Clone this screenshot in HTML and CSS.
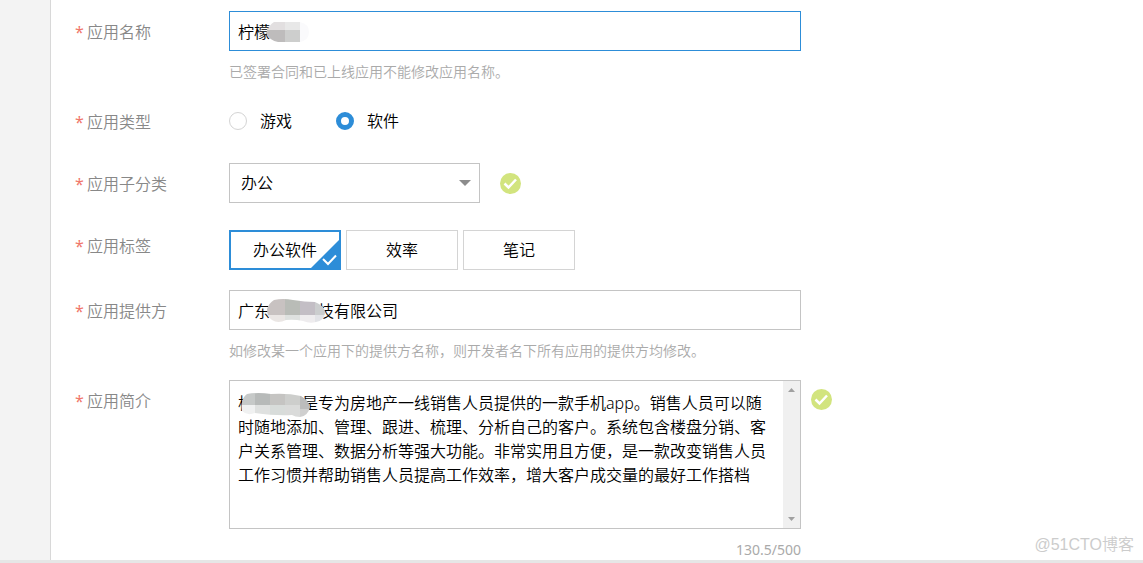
FILE: index.html
```html
<!DOCTYPE html>
<html lang="zh-CN">
<head>
<meta charset="utf-8">
<meta name="viewport" content="width=device-width, initial-scale=1">
<title>应用信息</title>
<link rel="stylesheet" href="styles.css">
</head>
<body>
<div class="page">
  <div class="body">
    <aside class="sidebar"></aside>
    <form class="form">
      <div class="row">
        <label class="label" for="name"><span class="star">*</span>应用名称</label>
        <div class="field">
          <div class="control">
            <input class="input input--focus" id="name" type="text" value="柠檬">
            <svg class="mask mask--name" width="44" height="22" viewBox="0 0 44 22" aria-hidden="true">
              <clipPath id="c1"><path d="M8 1H34Q43 3 43 11Q43 19 34 21H12Q4 20 0 12Q3 4 8 1Z"/></clipPath>
              <g clip-path="url(#c1)"><path fill="#e2dfe0" d="M0 0h19v9H0z"/><path fill="#e8e8e8" d="M19 0h15v9H19z"/><path fill="#bebcbc" d="M0 9h19v13H0z"/><path fill="#cdcecd" d="M19 9h15v13H19z"/><path fill="#fafafc" d="M34 0h10v22H34z"/></g>
            </svg>
          </div>
          <p class="hint">已签署合同和已上线应用不能修改应用名称。</p>
        </div>
      </div>

      <div class="row" role="radiogroup" aria-labelledby="type">
        <span class="label" id="type"><span class="star">*</span>应用类型</span>
        <div class="field radios">
          <label class="option"><input class="radio" type="radio" name="type">游戏</label>
          <label class="option"><input class="radio" type="radio" name="type" checked>软件</label>
        </div>
      </div>

      <div class="row row--select">
        <label class="label" for="category"><span class="star">*</span>应用子分类</label>
        <div class="field with-status with-status--select">
          <div class="select-box">
            <select class="select" id="category"><option>办公</option></select>
            <svg class="arrow" width="12" height="6" viewBox="0 0 12 6" aria-hidden="true"><path fill="#8c8c8c" d="M0 0h12L6 6z"/></svg>
          </div>
          <svg class="ok" width="21" height="21" viewBox="0 0 21 21" aria-hidden="true"><circle cx="10.500" cy="10.500" r="10.500" fill="#d2e47e"/><path d="M4.500 10.500l4 4 7.500-8" fill="none" stroke="#fff" stroke-width="2.500"/></svg>
        </div>
      </div>

      <div class="row" role="group" aria-labelledby="tags">
        <span class="label label--tags" id="tags"><span class="star">*</span>应用标签</span>
        <div class="field tags">
          <button class="tag tag--on" type="button" aria-pressed="true">办公软件
            <svg class="corner" width="28" height="28" viewBox="0 0 28 28" aria-hidden="true"><path fill="#2d8dd8" d="M28 0v28H0z"/><path d="M12 19l5 5 8-8.500" fill="none" stroke="#fff" stroke-width="2"/></svg>
          </button>
          <button class="tag" type="button">效率</button>
          <button class="tag" type="button">笔记</button>
        </div>
      </div>

      <div class="row">
        <label class="label" for="provider"><span class="star">*</span>应用提供方</label>
        <div class="field">
          <div class="control">
            <input class="input" id="provider" type="text" value="广东　　　技有限公司">
            <svg class="mask mask--provider" width="58" height="24" viewBox="0 0 58 24" aria-hidden="true">
              <clipPath id="c2"><path d="M7 1Q16-1 26 1Q38 3 48 3Q58 7 58 14Q57 22 49 23Q43 25 36 22Q27 20 19 21Q11 25 5 21Q0 18 0 10Q2 4 7 1Z"/></clipPath>
              <g clip-path="url(#c2)"><path fill="#c8c2c1" d="M0 0h18v16H0z"/><path fill="#b9bcb7" d="M18 0h15v16H18z"/><path fill="#c3bec5" d="M33 0h15v16H33z"/><path fill="#cbcdce" d="M48 0h10v16H48z"/><path fill="#eae6e4" d="M0 16h18v8H0z"/><path fill="#dee1df" d="M18 16h15v8H18z"/><path fill="#eeecee" d="M33 16h15v8H33z"/><path fill="#e2e3e7" d="M48 16h10v8H48z"/></g>
            </svg>
          </div>
          <p class="hint">如修改某一个应用下的提供方名称，则开发者名下所有应用的提供方均修改。</p>
        </div>
      </div>

      <div class="row row--last">
        <label class="label" for="intro"><span class="star">*</span>应用简介</label>
        <div class="field">
          <div class="with-status with-status--top">
            <div class="area-box">
              <textarea class="area" id="intro" rows="5">柠　　　是专为房地产一线销售人员提供的一款手机app。销售人员可以随
时随地添加、管理、跟进、梳理、分析自己的客户。系统包含楼盘分销、客
户关系管理、数据分析等强大功能。非常实用且方便，是一款改变销售人员
工作习惯并帮助销售人员提高工作效率，增大客户成交量的最好工作搭档</textarea>
              <div class="scroll" aria-hidden="true">
                <svg width="7" height="4" viewBox="0 0 7 4"><path fill="#a0a0a0" d="M0 4h7L3.500 0z"/></svg>
                <svg width="7" height="4" viewBox="0 0 7 4"><path fill="#a0a0a0" d="M0 0h7L3.500 4z"/></svg>
              </div>
              <svg class="mask mask--intro" width="69" height="24" viewBox="0 0 69 24" aria-hidden="true">
                <clipPath id="c3"><path d="M6 1Q17-1 30 1Q47 0 60 3Q68 8 69 14Q67 23 59 24Q54 24 51 22Q35 23 14 20Q6 23 1 18Q-1 6 6 1Z"/></clipPath>
                <g clip-path="url(#c3)"><path fill="#c6c9c8" d="M0 0h14v12H0z"/><path fill="#b7bab9" d="M14 0h15v12H14z"/><path fill="#c5c4c2" d="M29 0h15v12H29z"/><path fill="#cdcecc" d="M44 0h15v12H44z"/><path fill="#bcbcbc" d="M59 0h10v16H59z"/><path fill="#f0f1f1" d="M0 12h14v12H0z"/><path fill="#dfe1e0" d="M14 12h15v12H14z"/><path fill="#d8dcda" d="M29 12h15v12H29z"/><path fill="#dadbda" d="M44 12h15v12H44z"/><path fill="#cfcfcf" d="M59 16h10v8H59z"/></g>
              </svg>
            </div>
            <svg class="ok" width="21" height="21" viewBox="0 0 21 21" aria-hidden="true"><circle cx="10.500" cy="10.500" r="10.500" fill="#d2e47e"/><path d="M4.500 10.500l4 4 7.500-8" fill="none" stroke="#fff" stroke-width="2.500"/></svg>
          </div>
          <p class="counter">130.5/500</p>
        </div>
      </div>
    </form>
  </div>
  <div class="bottom"></div>
  <span class="watermark">@51CTO博客</span>
</div>
</body>
</html>
```
FILE: styles.css
```css
* { box-sizing: border-box; }

body {
  margin: 0;
  background: #fff;
  color: #000;
  font: 350 16px/24px "Noto Sans", "Noto Sans CJK SC", sans-serif;
}

input, select, textarea, button { font: inherit; color: inherit; }

.page {
  position: relative;
  display: flex;
  flex-direction: column;
  min-height: 100vh;
}

.body { display: flex; flex: 1; }

.sidebar {
  flex: 0 0 51px;
  background: #f3f3f3;
  border-right: 1px solid #d8d8d8;
}

.form { flex: 1; padding: 11px 24px 0; }

.row { display: flex; margin-bottom: 20px; }
.row--select { margin-bottom: 25px; }
.row--last { margin-bottom: 0; }

.label {
  display: flex;
  flex: 0 0 154px;
  gap: 4px;
  height: 42px;
  color: #888;
  line-height: 42px;
}
.label--tags { height: 32px; line-height: 32px; }
.star { width: 8px; color: #f0776c; font-weight: 400; }

.field { flex: 1; min-width: 0; }
.control { position: relative; max-width: 572px; }

.input {
  display: block;
  width: 100%;
  height: 40px;
  padding: 0 8px;
  border: 1px solid #c4c4c4;
  background: #fff;
  outline: none;
}
.input--focus { border-color: #2d8dd8; }

.hint {
  height: 20px;
  margin: 10px 0 0;
  color: #aaa;
  font-size: 14px;
  line-height: 22px;
}

.mask { position: absolute; pointer-events: none; }
.mask--name { left: 37px; top: 10px; }
.mask--provider { left: 38px; top: 9px; }
.mask--intro { left: 11px; top: 12px; }

.radios { display: flex; gap: 44px; height: 40px; }
.option { display: flex; align-items: center; gap: 13px; }
.radio {
  appearance: none;
  width: 18px;
  height: 18px;
  margin: 0;
  border: 1px solid #d4d4d4;
  border-radius: 50%;
  background: #fff;
}
.radio:checked { border: 5px solid #2d8dd8; }

.with-status { display: flex; align-items: center; gap: 20px; }
.with-status--select { height: 40px; }
.with-status--top { align-items: flex-start; gap: 10px; }
.with-status--top .ok { margin-top: 9px; }
.ok { flex: none; }

.select-box { position: relative; flex: 0 1 251px; }
.select {
  display: block;
  appearance: none;
  width: 100%;
  height: 40px;
  padding: 0 11px;
  border: 1px solid #c4c4c4;
  border-radius: 0;
  background: #fff;
}
.arrow { position: absolute; right: 9px; top: 17px; pointer-events: none; }

.tags { display: flex; gap: 5px; }
.tag {
  position: relative;
  width: 112px;
  height: 40px;
  padding: 0;
  border: 1px solid #d4d4d4;
  background: #fff;
}
.tag--on { border: 2px solid #2d8dd8; }
.corner { position: absolute; right: 0; bottom: 0; }

.area-box {
  position: relative;
  display: flex;
  flex: 0 1 572px;
  min-width: 0;
  border: 1px solid #c4c4c4;
}
.area {
  flex: 1;
  min-width: 0;
  height: 147px;
  padding: 10px 0 0 8px;
  border: 0;
  background: #fff;
  line-height: 24px;
  white-space: pre;
  overflow: hidden;
  resize: none;
  outline: none;
}
.scroll {
  display: flex;
  flex: 0 0 17px;
  flex-direction: column;
  align-items: center;
  justify-content: space-between;
  padding: 7px 0;
  background: #f0f0f0;
}

.counter {
  max-width: 572px;
  margin: 11px 0 0;
  color: #aaa;
  font-size: 14px;
  font-weight: 400;
  line-height: 20px;
  text-align: right;
}

.bottom { height: 3px; background: #e6e6e6; }

.watermark {
  position: absolute;
  right: 9px;
  bottom: 6px;
  color: #ccc;
  font-family: "Liberation Sans", "Noto Sans CJK SC", sans-serif;
}
```
